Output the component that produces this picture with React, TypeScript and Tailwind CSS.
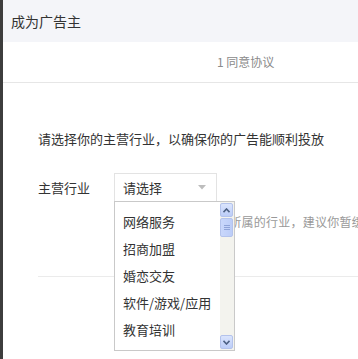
import React from 'react';

const options = ['网络服务', '招商加盟', '婚恋交友', '软件/游戏/应用', '教育培训', '医疗健康'];

function ScrollButton({ up }: { up?: boolean }) {
  return (
    <div className="h-[14px] w-[13px] rounded-[2px] border border-[#b4c3ec] bg-gradient-to-b from-[#dbe5fd] to-[#bccdf8] flex items-center justify-center">
      <svg width="7" height="5" viewBox="0 0 7 5">
        <path
          d={up ? 'M0.5 4.2 L3.5 1 L6.5 4.2' : 'M0.5 0.8 L3.5 4 L6.5 0.8'}
          fill="none"
          stroke="#4d6185"
          strokeWidth="1.6"
        />
      </svg>
    </div>
  );
}

export default function App() {
  return (
    <div
      className="w-[358px] h-[359px] overflow-hidden bg-white flex"
      style={{ fontFamily: '"Noto Sans CJK SC", "Liberation Sans", sans-serif' }}
    >
      <div className="w-[3px] shrink-0 bg-[#3d3d3d]" />
      <div className="flex-1 relative">
        <div className="h-[42px] bg-[#f4f5f9] pl-[8px] flex items-center text-[14px] text-[#333]">
          成为广告主
        </div>
        <div className="h-[41px] border-b border-[#e6e6e6] flex items-center pl-[214px] text-[12px] text-[#8a8a8a] whitespace-nowrap">
          1 同意协议
        </div>
        <div className="pl-[35px]">
          <p className="mt-[47px] text-[13px] leading-[18px] text-[#333] whitespace-nowrap">
            请选择你的主营行业，以确保你的广告能顺利投放
          </p>
          <div className="mt-[25px] flex items-center h-[29px]">
            <span className="w-[76px] text-[13px] text-[#333]">主营行业</span>
            <div className="w-[103px] h-[29px] border border-[#e3e3e3] flex items-center justify-between pl-[8px] pr-[10px] text-[13px] text-[#333]">
              <span>请选择</span>
              <svg width="8" height="5" viewBox="0 0 8 5">
                <path d="M0 0 L8 0 L4 4.5 Z" fill="#bdbdbd" />
              </svg>
            </div>
          </div>
          <p className="mt-[11px] ml-[81px] text-[12px] leading-[18px] tracking-[0.25px] text-[#999] whitespace-nowrap">
            若以上选项中没有你所属的行业，建议你暂缓投放
          </p>
          <div className="mt-[45px] border-t border-[#ebebeb]" />
        </div>

        <div className="absolute left-[111px] top-[201px] w-[121px] h-[150px] border border-[#c9c9c9] bg-white overflow-hidden flex">
          <div className="flex-1 pt-[6px] overflow-hidden">
            {options.map((o) => (
              <div key={o} className="h-[27px] pl-[8px] flex items-center text-[13px] text-[#333] whitespace-nowrap">
                {o}
              </div>
            ))}
          </div>
          <div className="w-[14px] shrink-0 bg-[#f3f3ee] flex flex-col pt-[1px] pb-[1px]">
            <ScrollButton up />
            <div className="mt-[1px] h-[19px] w-[13px] rounded-[2px] border border-[#b4c3ec] bg-gradient-to-r from-[#c9d7fb] to-[#bccdf8] flex flex-col items-center justify-center gap-[1px]">
              <div className="w-[6px] h-[1px] bg-[#8fa3d8]" />
              <div className="w-[6px] h-[1px] bg-[#8fa3d8]" />
              <div className="w-[6px] h-[1px] bg-[#8fa3d8]" />
            </div>
            <div className="flex-1" />
            <ScrollButton />
          </div>
        </div>
      </div>
    </div>
  );
}
